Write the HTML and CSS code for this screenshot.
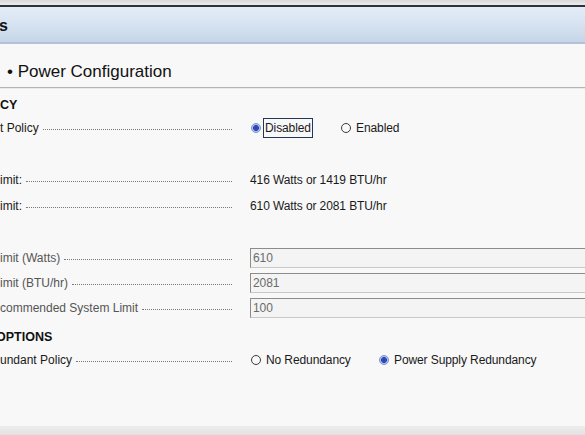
FILE: index.html
```html
<!DOCTYPE html>
<html>
<head>
<meta charset="utf-8">
<link rel="stylesheet" href="styles.css">
</head>
<body>
<div class="page">
  <div class="topstrip"></div>
  <div class="bluebar"><span class="bluetitle">s</span></div>
  <div class="titlebar"><span class="title">• Power Configuration</span></div>
  <div class="content">
    <div class="sect"><span class="secttext">CY</span></div>
    <div class="row">
      <div class="label"><span>t Policy</span><span class="lead"></span></div>
      <div class="value">
        <span class="opt opt1"><span class="radio on"></span><span class="focus">Disabled</span></span>
        <span class="opt"><span class="radio"></span><span>Enabled</span></span>
      </div>
    </div>
    <div class="row"></div>
    <div class="row">
      <div class="label"><span>imit:</span><span class="lead"></span></div>
      <div class="value">416 Watts or 1419 BTU/hr</div>
    </div>
    <div class="row">
      <div class="label"><span>imit:</span><span class="lead"></span></div>
      <div class="value">610 Watts or 2081 BTU/hr</div>
    </div>
    <div class="row"></div>
    <div class="row irow">
      <div class="label grey"><span>imit (Watts)</span><span class="lead"></span></div>
      <div class="value"><div class="input">610</div></div>
    </div>
    <div class="row irow">
      <div class="label grey"><span>imit (BTU/hr)</span><span class="lead"></span></div>
      <div class="value"><div class="input">2081</div></div>
    </div>
    <div class="row irow">
      <div class="label grey"><span>commended System Limit</span><span class="lead"></span></div>
      <div class="value"><div class="input">100</div></div>
    </div>
    <div class="sect sect2"><span class="secttext cut">OPTIONS</span></div>
    <div class="row lastrow">
      <div class="label"><span>undant Policy</span><span class="lead"></span></div>
      <div class="value">
        <span class="opt opt2"><span class="radio"></span><span>No Redundancy</span></span>
        <span class="opt"><span class="radio on"></span><span>Power Supply Redundancy</span></span>
      </div>
    </div>
  </div>
  <div class="filler"></div>
  <div class="bottom"></div>
</div>
</body>
</html>
```
FILE: styles.css
```css
html, body {
  margin: 0;
  padding: 0;
}
body {
  width: 585px;
  height: 435px;
  overflow: hidden;
  background: #f8f8f8;
  font-family: "Liberation Sans", Arial, sans-serif;
  font-size: 12px;
  color: #1a1a1a;
}
.page {
  display: flex;
  flex-direction: column;
  height: 435px;
}
.topstrip {
  height: 5px;
  background: linear-gradient(#d9d9d9, #ececec);
  border-bottom: 2px solid #2c3236;
}
.bluebar {
  height: 35px;
  background: linear-gradient(#e2ecf8 0%, #d9e5f2 40%, #c6d6e8 100%);
  border-bottom: 2px solid #b3c2d6;
  display: flex;
  align-items: center;
}
.bluetitle {
  font-weight: bold;
  font-size: 16px;
  color: #111;
  margin-left: -1px;
  margin-top: 2px;
}
.titlebar {
  height: 44px;
  border-bottom: 1px solid #b4b4b4;
  display: flex;
  align-items: center;
  padding-left: 7px;
  padding-top: 13px;
  box-sizing: border-box;
}
.title {
  font-size: 17px;
  color: #111;
}
.content {
  border-top: 1px solid #e9e9e9;
  padding-top: 6px;
  display: flex;
  flex-direction: column;
}
.sect {
  height: 20px;
  display: flex;
  align-items: center;
}
.sect2 {
  margin-top: 7px;
}
.secttext {
  font-weight: bold;
  font-size: 12.5px;
  color: #111;
}
.cut {
  margin-left: -4px;
}
.row {
  height: 26px;
  display: flex;
  align-items: center;
}
.irow {
  height: 25px;
}
.lastrow {
  height: 26px;
}
.label {
  width: 232px;
  display: flex;
  align-items: center;
  flex: none;
}
.label.grey {
  color: #555;
}
.lead {
  flex: 1;
  border-bottom: 1px dotted #7a7a7a;
  margin-left: 4px;
  margin-top: 3px;
  height: 0;
}
.value {
  margin-left: 18px;
  flex: 1;
  display: flex;
  align-items: center;
  letter-spacing: -0.1px;
}
.opt {
  display: flex;
  align-items: center;
}
.opt1 {
  width: 90px;
}
.opt2 {
  width: 128px;
}
.radio {
  width: 8px;
  height: 8px;
  border: 1px solid #3a3a3a;
  border-radius: 50%;
  margin-left: 1px;
  margin-right: 5px;
  background: #fafafa;
  box-sizing: content-box;
}
.radio.on {
  border-color: #7d93c9;
  background: radial-gradient(circle, #2c49b8 0 2.6px, #a9b9e3 3.2px, #e8ecf8 100%);
}
.focus {
  border: 1px solid #23365c;
  padding: 2px 1px 2px 1px;
  margin-left: -3px;
  line-height: 14px;
}
.input {
  height: 20px;
  box-sizing: border-box;
  width: 400px;
  border-top: 1px solid #8c8c8c;
  border-left: 1px solid #8c8c8c;
  border-bottom: 1px solid #c8c8c8;
  border-right: 1px solid #c8c8c8;
  background: #f4f4f4;
  color: #6a6a6a;
  display: flex;
  align-items: center;
  padding-left: 2px;
}
.filler {
  flex: 1;
}
.bottom {
  height: 9px;
  background: linear-gradient(#ededed, #e2e2e2);
}
```
